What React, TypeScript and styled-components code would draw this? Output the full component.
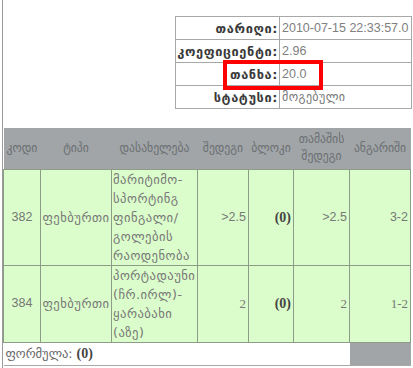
import React from "react";
import styled, { createGlobalStyle } from "styled-components";

const Global = createGlobalStyle`
  html, body { margin: 0; padding: 0; background: #fff; }
  body { font-family: "DejaVu Sans", "Liberation Sans", sans-serif; }
`;

const Page = styled.div`
  margin-left: 2px;
  border-left: 1px solid #9a9a9a;
  height: 368px;
  width: 411px;
  box-sizing: border-box;
  padding-top: 16px;
`;

const InfoWrap = styled.div`
  position: relative;
  margin-left: 172px;
  width: 237px;
`;

const InfoTable = styled.table`
  border-collapse: collapse;
  width: 237px;
  table-layout: fixed;
`;

const InfoLabel = styled.td`
  border: 1px solid #a8a8a8;
  width: 102px;
  height: 22px;
  padding: 0 1px 0 0;
  text-align: right;
  font-weight: bold;
  color: #3a3a3a;
  white-space: nowrap;
  font-family: "DejaVu Sans", sans-serif;
  font-size: 12.8px;
  letter-spacing: 0.6px;
`;

const InfoValue = styled.td`
  border: 1px solid #a8a8a8;
  padding: 0 0 0 2px;
  color: #808080;
  white-space: nowrap;
  font-family: "Liberation Sans", "DejaVu Sans", sans-serif;
  font-size: 12.5px;
`;

const GeoValue = styled.span`
  font-family: "DejaVu Sans", sans-serif;
  font-size: 12px;
  color: #777;
  letter-spacing: 0.4px;
`;

const Highlight = styled.div`
  position: absolute;
  left: 48px;
  top: 44px;
  width: 100px;
  height: 30px;
  box-sizing: border-box;
  border: 4px solid #f00;
`;

const MainTable = styled.table`
  margin-top: 19px;
  border-collapse: collapse;
  width: 407px;
  table-layout: fixed;
`;

const HeadRow = styled.tr`
  background: #a1a5a8;
  height: 41px;
`;

const Th = styled.th<{ $w: number }>`
  width: ${(p) => p.$w}px;
  font-weight: normal;
  color: #6b6f72;
  font-size: 11.7px;
  padding: 0;
  text-align: center;
  line-height: 17px;
  white-space: nowrap;
  font-family: "DejaVu Sans", sans-serif;
`;

const BodyRow = styled.tr<{ $h: number }>`
  background: #dbfdcb;
  height: ${(p) => p.$h}px;
`;

const Td = styled.td<{ $align?: string; $serif?: boolean; $bold?: boolean }>`
  border: 1px solid #8c9c86;
  padding: 0 2px;
  text-align: ${(p) => p.$align || "right"};
  vertical-align: middle;
  color: ${(p) => (p.$bold ? "#444" : "#777")};
  font-family: ${(p) =>
    p.$serif ? '"Liberation Serif", serif' : '"Liberation Sans", sans-serif'};
  font-size: ${(p) => (p.$bold ? "14px" : p.$serif ? "13px" : "12.5px")};
  font-weight: ${(p) => (p.$bold ? "bold" : "normal")};
  line-height: 19px;
`;

const GeoTd = styled(Td)`
  font-family: "DejaVu Sans", sans-serif;
  font-size: 12.6px;
  padding: 0 1px;
  white-space: nowrap;
  letter-spacing: 0.5px;
`;

const FootRow = styled.tr`
  height: 23px;
`;

const FootCell = styled.td`
  border-bottom: 1px solid #a8a8a8;
  padding: 0 2px;
  color: #666;
  font-family: "DejaVu Sans", sans-serif;
  font-size: 12.5px;
`;

const Bold = styled.b`
  font-family: "Liberation Serif", serif;
  font-size: 14px;
  color: #444;
`;

const FootGray = styled.td`
  background: #a1a5a8;
  border-bottom: 1px solid #a8a8a8;
`;

const info = [
  { label: "თარიღი:", value: "2010-07-15 22:33:57.0" },
  { label: "კოეფიციენტი:", value: "2.96" },
  { label: "თანხა:", value: "20.0" },
  { label: "სტატუსი:", value: "მოგებული", geo: true },
];

export default function App() {
  return (
    <>
      <Global />
      <Page>
        <InfoWrap>
          <InfoTable>
            <tbody>
              {info.map((r) => (
                <tr key={r.label}>
                  <InfoLabel>{r.label}</InfoLabel>
                  <InfoValue>{r.geo ? <GeoValue>{r.value}</GeoValue> : r.value}</InfoValue>
                </tr>
              ))}
            </tbody>
          </InfoTable>
          <Highlight />
        </InfoWrap>
        <MainTable>
          <thead>
            <HeadRow>
              <Th $w={37}>კოდი</Th>
              <Th $w={71}>ტიპი</Th>
              <Th $w={86}>დასახელება</Th>
              <Th $w={51}>შედეგი</Th>
              <Th $w={45}>ბლოკი</Th>
              <Th $w={56}>თამაშის<br />შედეგი</Th>
              <Th $w={61}>ანგარიში</Th>
            </HeadRow>
          </thead>
          <tbody>
            <BodyRow $h={95}>
              <Td $align="center">382</Td>
              <GeoTd $align="center">ფეხბურთი</GeoTd>
              <GeoTd $align="left">
                მარიტიმო-<br />სპორტინგ<br />ფინგალი/<br />გოლების<br />რაოდენობა
              </GeoTd>
              <Td>&gt;2.5</Td>
              <Td $serif $bold>(0)</Td>
              <Td>&gt;2.5</Td>
              <Td>3-2</Td>
            </BodyRow>
            <BodyRow $h={77}>
              <Td $align="center">384</Td>
              <GeoTd $align="center">ფეხბურთი</GeoTd>
              <GeoTd $align="left">
                პორტადაუნი<br />(ჩრ.ირლ)-<br />ყარაბახი<br />(აზე)
              </GeoTd>
              <Td $serif>2</Td>
              <Td $serif $bold>(0)</Td>
              <Td $serif>2</Td>
              <Td $serif>1-2</Td>
            </BodyRow>
            <FootRow>
              <FootCell colSpan={6}>
                ფორმულა: <Bold>(0)</Bold>
              </FootCell>
              <FootGray />
            </FootRow>
          </tbody>
        </MainTable>
      </Page>
    </>
  );
}
